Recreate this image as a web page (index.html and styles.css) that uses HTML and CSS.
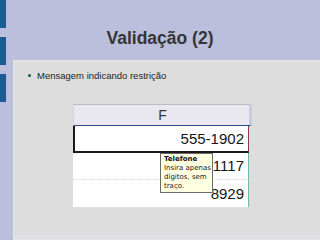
FILE: index.html
```html
<!DOCTYPE html>
<html>
<head>
<meta charset="utf-8">
<link rel="stylesheet" href="styles.css">
</head>
<body>
<div class="slide">
  <div class="rail">
    <span class="blk"></span>
    <span class="blk"></span>
    <span class="blk"></span>
  </div>
  <div class="main">
    <h1 class="title">Validação (2)</h1>
    <div class="content">
      <ul class="bullets">
        <li>Mensagem indicando restrição</li>
      </ul>
      <div class="sheet">
        <div class="hdr">F</div>
        <div class="row sel">555-1902</div>
        <div class="row mid">1117</div>
        <div class="row last">8929</div>
        <div class="tip">
          <div class="tip-title">Telefone</div>
          <div>Insira apenas</div>
          <div>dígitos, sem</div>
          <div>traço.</div>
        </div>
      </div>
    </div>
  </div>
</div>
</body>
</html>
```

FILE: styles.css
```css
* { box-sizing: border-box; }
html, body { margin: 0; padding: 0; }
body {
  width: 320px;
  height: 240px;
  overflow: hidden;
  font-family: "Liberation Sans", Arial, sans-serif;
}
.slide {
  display: flex;
  width: 320px;
  height: 240px;
  background: #bbbfdc;
}
.rail {
  width: 13px;
  flex: none;
  display: flex;
  flex-direction: column;
  gap: 9px;
}
.blk {
  display: block;
  width: 6px;
  height: 28px;
  background: #1d5b93;
}
.main {
  flex: 1;
  display: flex;
  flex-direction: column;
}
.title {
  margin: 0;
  height: 60px;
  padding-top: 28px;
  font-size: 17.5px;
  line-height: 20px;
  font-weight: bold;
  color: #353535;
  text-align: center;
  padding-right: 13px;
}
.content {
  flex: 1;
  background: #dddddd;
  border-top: 1px solid #e6e6e6;
  border-left: 1px solid #e6e6e6;
  padding-top: 8px;
  border-bottom: 5px solid #e1e1e4;
}
.bullets {
  margin: 0;
  padding: 0;
  list-style: none;
}
.bullets li {
  position: relative;
  padding-left: 23px;
  font-size: 9.5px;
  line-height: 13px;
  color: #222;
}
.bullets li::before {
  content: "";
  position: absolute;
  left: 14px;
  top: 5px;
  width: 3px;
  height: 3px;
  border-radius: 50%;
  background: #1f5a48;
}
.sheet {
  position: relative;
  margin-top: 22px;
  margin-left: 59px;
  width: 176px;
}
.hdr {
  width: 179px;
  height: 22px;
  background: #e9e7ef;
  border-top: 1px solid #bcbcc4;
  border-left: 1px solid #d4d4dc;
  border-right: 3px solid #c6cde0;
  border-bottom: 1px solid #2d4a8c;
  text-align: center;
  font-size: 14px;
  line-height: 20px;
  color: #333;
  padding-left: 2px;
}
.row {
  background: #fff;
  height: 27px;
  text-align: right;
  font-size: 15px;
  line-height: 27px;
  color: #151515;
  padding-right: 4px;
  border-right: 1px solid #6fb8a8;
}
.row.sel {
  line-height: 26px;
  border-left: 2px solid #1a1a1a;
  border-bottom: 2px solid #1a1a1a;
  border-right: 1px solid #8c3a5a;
}
.row.mid {
  border-bottom: 1px dotted #d8d8d8;
  line-height: 26px;
}
.tip {
  position: absolute;
  left: 87px;
  top: 49px;
  width: 53px;
  height: 40px;
  background: #ffffe1;
  border: 1px solid #6a6a6a;
  padding: 1px 0 0 3px;
  font-family: "DejaVu Sans", Verdana, sans-serif;
  font-size: 7px;
  line-height: 9px;
  color: #222;
  white-space: nowrap;
}
.tip-title {
  font-weight: bold;
  color: #111;
}
```
